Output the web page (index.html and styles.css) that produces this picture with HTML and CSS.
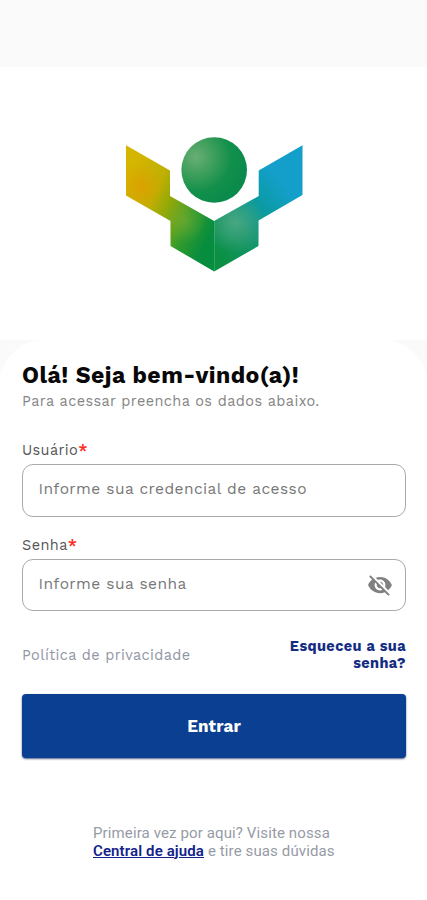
FILE: index.html
```html
<!DOCTYPE html>
<html lang="pt-BR">
<head>
<meta charset="utf-8">
<meta name="viewport" content="width=device-width, initial-scale=1">
<title>Entrar</title>
<link rel="stylesheet" href="styles.css">
</head>
<body>
<main class="screen">
  <header class="hero">
    <svg class="logo" viewBox="126 137 177 135" width="177" height="135" aria-hidden="true">
      <defs>
        <linearGradient id="left" gradientUnits="userSpaceOnUse" x1="126" y1="185" x2="214" y2="225">
          <stop offset="0" stop-color="#d4b500"/>
          <stop offset=".3" stop-color="#c0b003"/>
          <stop offset=".5" stop-color="#8ea808"/>
          <stop offset=".75" stop-color="#329b2c"/>
          <stop offset="1" stop-color="#078d3e"/>
        </linearGradient>
        <linearGradient id="right" gradientUnits="userSpaceOnUse" x1="214" y1="250" x2="284" y2="185">
          <stop offset="0" stop-color="#0b9043"/>
          <stop offset=".4" stop-color="#169571"/>
          <stop offset=".7" stop-color="#0b9ba6"/>
          <stop offset="1" stop-color="#149fca"/>
        </linearGradient>
        <radialGradient id="warm" gradientUnits="userSpaceOnUse" cx="141" cy="187" r="24">
          <stop offset="0" stop-color="#e09c00" stop-opacity=".75"/>
          <stop offset="1" stop-color="#e09c00" stop-opacity="0"/>
        </radialGradient>
        <radialGradient id="glowLeft" gradientUnits="userSpaceOnUse" cx="184" cy="221" r="22">
          <stop offset="0" stop-color="#8eb23c" stop-opacity=".45"/>
          <stop offset="1" stop-color="#8eb23c" stop-opacity="0"/>
        </radialGradient>
        <radialGradient id="glowRight" gradientUnits="userSpaceOnUse" cx="235" cy="223" r="30">
          <stop offset="0" stop-color="#58ad88" stop-opacity=".75"/>
          <stop offset="1" stop-color="#58ad88" stop-opacity="0"/>
        </radialGradient>
        <radialGradient id="ball" gradientUnits="userSpaceOnUse" cx="196" cy="157" r="50">
          <stop offset="0" stop-color="#68ae74"/>
          <stop offset=".35" stop-color="#3f9f5c"/>
          <stop offset=".7" stop-color="#12904b"/>
          <stop offset="1" stop-color="#0a8a4b"/>
        </radialGradient>
        <path id="wingLeft" d="M126 145.200L170 170.500V196L214.200 221V271.500L170.500 246V221L126 195.500Z"/>
        <path id="wingRight" d="M302.500 145.200L258.700 170.500V196L214.200 221V271.500L258.500 246V220.500L302.500 195Z"/>
      </defs>
      <use href="#wingLeft" fill="url(#left)"/>
      <use href="#wingLeft" fill="url(#warm)"/>
      <use href="#wingLeft" fill="url(#glowLeft)"/>
      <use href="#wingRight" fill="url(#right)"/>
      <use href="#wingRight" fill="url(#glowRight)"/>
      <circle cx="214.200" cy="170" r="32.800" fill="url(#ball)"/>
    </svg>
  </header>
  <div class="backdrop">
    <form class="card">
      <h1 class="title">Olá! Seja bem-vindo(a)!</h1>
      <p class="subtitle">Para acessar preencha os dados abaixo.</p>
      <div class="field user">
        <div class="label">Usuário<span class="required">*</span></div>
        <div class="input"><span class="hint">Informe sua credencial de acesso</span></div>
      </div>
      <div class="field password">
        <div class="label">Senha<span class="required">*</span></div>
        <div class="input"><span class="hint">Informe sua senha</span>
          <svg class="eye" viewBox="0 0 24 24" width="26" height="26" aria-hidden="true"><path fill="#808080" d="M12 7c2.760 0 5 2.240 5 5 0 .650-.130 1.260-.360 1.830l2.920 2.920c1.510-1.260 2.700-2.890 3.430-4.750-1.730-4.390-6-7.500-11-7.500-1.400 0-2.740.250-3.980.700l2.160 2.160C10.740 7.130 11.350 7 12 7zM2 4.270l2.280 2.280.460.460C3.080 8.300 1.780 10.020 1 12c1.730 4.390 6 7.500 11 7.500 1.550 0 3.030-.300 4.380-.840l.420.420L19.730 22 21 20.730 3.270 3 2 4.270zM7.530 9.800l1.550 1.550c-.050.210-.080.430-.080.650 0 1.660 1.340 3 3 3 .220 0 .440-.030.650-.080l1.550 1.550c-.670.330-1.410.530-2.200.530-2.760 0-5-2.240-5-5 0-.790.200-1.530.530-2.200zm4.310-.780l3.150 3.150.020-.160c0-1.660-1.340-3-3-3l-.170.010z"/></svg>
        </div>
      </div>
      <div class="links">
        <a class="policy">Política de privacidade</a>
        <a class="forgot">Esqueceu a sua<br>senha?</a>
      </div>
      <div class="submit" role="button"><span>Entrar</span></div>
      <p class="help">Primeira vez por aqui? Visite nossa<br><a class="help-link">Central de ajuda</a> e tire suas dúvidas</p>
    </form>
  </div>
</main>
</body>
</html>
```
FILE: styles.css
```css
* { box-sizing: border-box; }
body { margin: 0; background: #fff; font-family: "Work Sans", Inter, sans-serif; }
h1, p { margin: 0; }
.screen { width: 427px; height: 900px; overflow: hidden; border-top: 67px solid #fafafa; }
.hero { height: 273px; padding-top: 70px; background: #fff; }
.logo { display: block; margin-left: 126px; }
.backdrop { background: linear-gradient(#fafafa 0 20px, #fff 50px); }
.card { height: 560px; padding: 23px 21px 0 22px; background: #fff; border-radius: 44px 44px 0 0; white-space: nowrap; }
.title { font-size: 23px; line-height: 26px; font-weight: 700; letter-spacing: .46px; color: #080808; }
.subtitle { margin-top: 4px; font-size: 14.500px; line-height: 18px; letter-spacing: .39px; color: #858585; }
.user { margin-top: 31px; }
.password { margin-top: 20px; }
.label { height: 22px; font-size: 14.500px; line-height: 18px; letter-spacing: .4px; color: #555; }
.required { color: #ff2a20; font-size: 16px; font-weight: 600; line-height: 16px; }
.input { display: flex; align-items: center; justify-content: space-between; height: 53px; padding: 0 13px 3px 15.500px; border: 1px solid #aaa; border-radius: 11px; }
.password .input { height: 52px; padding: 0 12.500px 1px 15.500px; }
.password .hint { padding-bottom: 2px; }
.hint { font-size: 15.500px; letter-spacing: .42px; color: #777; }
.links { display: flex; justify-content: space-between; align-items: center; margin-top: 27px; height: 34px; }
.policy { font-size: 14.500px; letter-spacing: .36px; color: #9196a5; }
.forgot { font-size: 14.500px; line-height: 17px; font-weight: 700; letter-spacing: .4px; text-align: right; color: #142d83; }
.submit { display: flex; align-items: center; justify-content: center; margin: 22px 0 0; height: 64px; padding-bottom: 1px; border-radius: 4px; background: #0b3f92; box-shadow: 0 1px 2px #52618a; color: #fff; font-size: 17px; font-weight: 700; letter-spacing: .1px; }
.help { margin: 67px 0 0 71px; font-family: Roboto, sans-serif; font-size: 15px; line-height: 17.500px; letter-spacing: .12px; color: #969ba6; }
.help-link { color: #12238a; font-weight: 600; text-decoration: underline; }
```
